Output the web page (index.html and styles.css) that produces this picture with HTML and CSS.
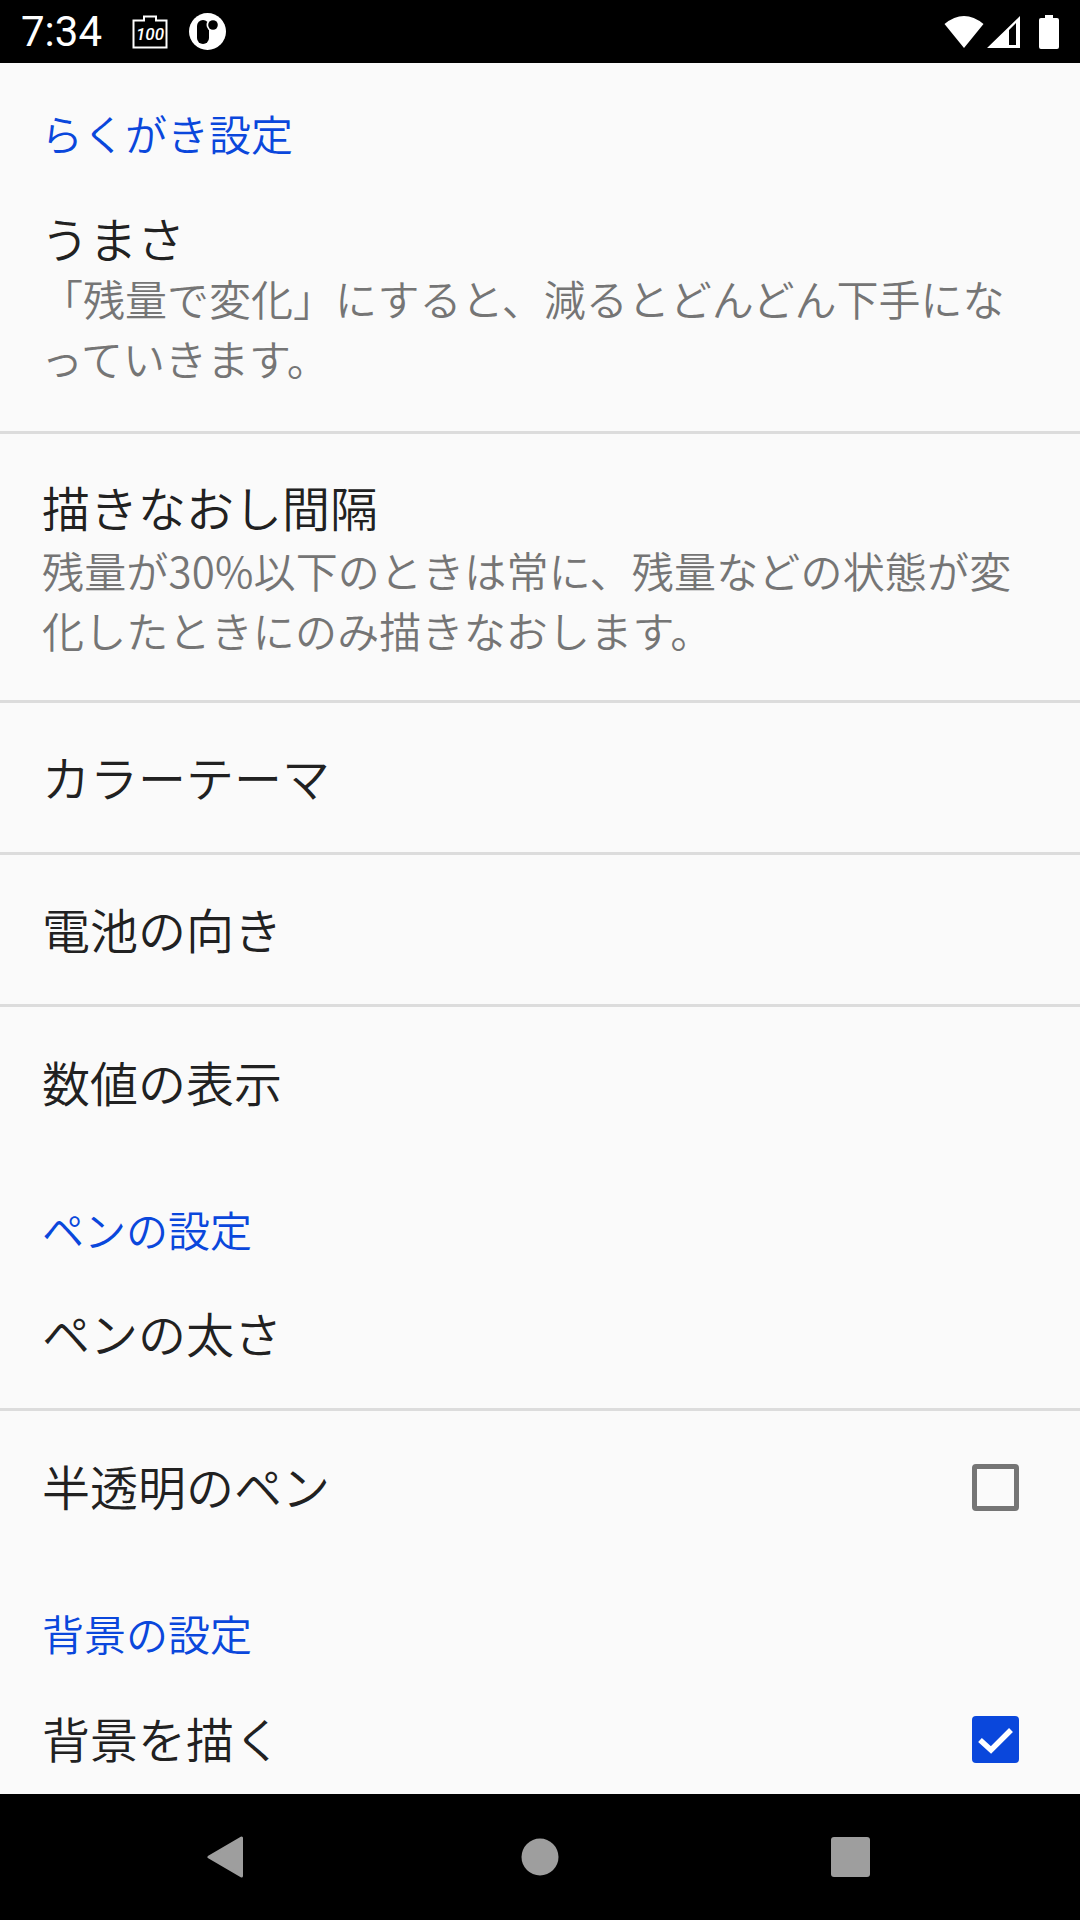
FILE: index.html
```html
<!DOCTYPE html>
<html lang="ja">
<head>
  <meta charset="UTF-8">
  <title>らくがき設定</title>
  <link rel="stylesheet" href="styles.css">
</head>
<body>
  <div class="status-bar">
    <span class="time">7:34</span>
    <svg class="icon-camera" width="36" height="34" viewBox="0 0 36 34">
      <path d="M1.5 5.5H12V1.5H24V5.5H34.5V32.5H1.5Z" fill="none" stroke="#fff" stroke-width="2"/>
      <text x="18" y="25" class="camera-label" text-anchor="middle">100</text>
    </svg>
    <svg class="icon-logo" width="37" height="37" viewBox="0 0 37 37">
      <circle cx="18.5" cy="18.5" r="18.5" fill="#fff"/>
      <rect x="8" y="7" width="12" height="24" rx="6" fill="#000"/>
      <circle cx="24" cy="12" r="6.5" fill="#fff"/>
      <circle cx="24" cy="12" r="4.8" fill="#000"/>
    </svg>
    <div class="status-right">
      <svg width="40" height="32" viewBox="0 0 40 32"><path d="M0.5 8Q20 -8 39.5 8L20 32Z" fill="#fff"/></svg>
      <svg width="33" height="32" viewBox="0 0 33 32"><path fill-rule="evenodd" d="M33 0V32H0ZM29 7L22 14V29H29Z" fill="#fff"/></svg>
      <svg class="icon-battery" width="20" height="34" viewBox="0 0 20 34"><path d="M6 0H14V3H18Q20 3 20 5V32Q20 34 18 34H2Q0 34 0 32V5Q0 3 2 3H6Z" fill="#fff"/></svg>
    </div>
  </div>

  <div class="list">
    <h2 class="section-title first">らくがき設定</h2>
    <div class="item first-item with-line">
      <div class="item-text">
        <div class="item-title">うまさ</div>
        <div class="item-summary">「残量で変化」にすると、減るとどんどん下手になっていきます。</div>
      </div>
    </div>
    <div class="item multi with-line">
      <div class="item-text">
        <div class="item-title">描きなおし間隔</div>
        <div class="item-summary">残量が30%以下のときは常に、残量などの状態が変化したときにのみ描きなおします。</div>
      </div>
    </div>
    <div class="item with-line"><div class="item-title">カラーテーマ</div></div>
    <div class="item with-line"><div class="item-title">電池の向き</div></div>
    <div class="item"><div class="item-title">数値の表示</div></div>

    <h2 class="section-title">ペンの設定</h2>
    <div class="item with-line"><div class="item-title">ペンの太さ</div></div>
    <div class="item">
      <div class="item-title">半透明のペン</div>
      <span class="checkbox"></span>
    </div>

    <h2 class="section-title">背景の設定</h2>
    <div class="item">
      <div class="item-title">背景を描く</div>
      <span class="checkbox checked">
        <svg width="47" height="47" viewBox="0 0 47 47"><path d="M8 24L19 34L39 14" fill="none" stroke="#fff" stroke-width="5.5"/></svg>
      </span>
    </div>
  </div>

  <div class="nav-bar">
    <svg class="nav-back" width="36" height="42" viewBox="0 0 36 42"><path d="M34.5 2V40L2 21Z" fill="#9e9e9e" stroke="#9e9e9e" stroke-width="3" stroke-linejoin="round"/></svg>
    <svg class="nav-home" width="38" height="38" viewBox="0 0 38 38"><circle cx="19" cy="19" r="18.5" fill="#9e9e9e"/></svg>
    <svg class="nav-recent" width="39" height="40" viewBox="0 0 39 40"><rect width="39" height="40" rx="3" fill="#9e9e9e"/></svg>
  </div>
</body>
</html>
```

FILE: styles.css
```css
html, body {
  margin: 0;
  padding: 0;
}

body {
  width: 1080px;
  height: 1920px;
  display: flex;
  flex-direction: column;
  overflow: hidden;
  background-color: #fafafa;
  font-family: "Noto Sans CJK JP", "Noto Sans", sans-serif;
  font-weight: 350;
}

.status-bar {
  height: 63px;
  flex-shrink: 0;
  display: flex;
  align-items: center;
  padding: 0 21px 0 21px;
  background-color: #000;
  color: #fff;
}

.time {
  font-family: Roboto, sans-serif;
  font-size: 42px;
  font-weight: 400;
  line-height: 63px;
}

.icon-camera {
  margin-left: 30px;
}

.camera-label {
  font-family: Roboto, sans-serif;
  font-size: 17px;
  font-weight: 500;
  font-style: italic;
  fill: #fff;
}

.icon-logo {
  margin-left: 21px;
}

.status-right {
  margin-left: auto;
  display: flex;
  align-items: center;
  gap: 3px;
}

.icon-battery {
  margin-left: 16px;
}

.list {
  flex: 1;
  min-height: 0;
  overflow: hidden;
}

.section-title {
  margin: 0;
  padding: 40px 42px 0;
  font-size: 42px;
  font-weight: 350;
  line-height: 60px;
  color: #0a47dc;
}

.section-title.first {
  padding-left: 41px;
}

.item {
  display: flex;
  align-items: center;
  justify-content: space-between;
  box-sizing: border-box;
  height: 152px;
  flex-shrink: 0;
  padding: 0 61px 0 42px;
}

.item.with-line {
  border-bottom: 3px solid #dcdcdc;
}

.item.first-item,
.item.multi {
  height: auto;
}

.item.first-item {
  padding: 44px 61px 43px 41px;
}

.item.multi {
  padding: 42px 61px 40px 42px;
}

.item-title {
  padding-bottom: 4px;
  font-size: 48px;
  line-height: 60px;
  color: #212121;
}

.first-item .item-title {
  padding-bottom: 1px;
}

.item-summary {
  font-size: 42px;
  line-height: 60px;
  color: #757575;
}

.multi .item-summary {
  letter-spacing: 0.17px;
}

.checkbox {
  display: block;
  box-sizing: border-box;
  width: 47px;
  height: 47px;
  border: 5px solid #757575;
  border-radius: 4px;
}

.checkbox.checked {
  border: none;
  background-color: #0a47dc;
}

.checkbox svg {
  display: block;
}

.nav-bar {
  height: 126px;
  flex-shrink: 0;
  display: flex;
  align-items: center;
  padding-left: 207px;
  background-color: #000;
}

.nav-home {
  margin-left: 278px;
}

.nav-recent {
  margin-left: 272px;
}
```
